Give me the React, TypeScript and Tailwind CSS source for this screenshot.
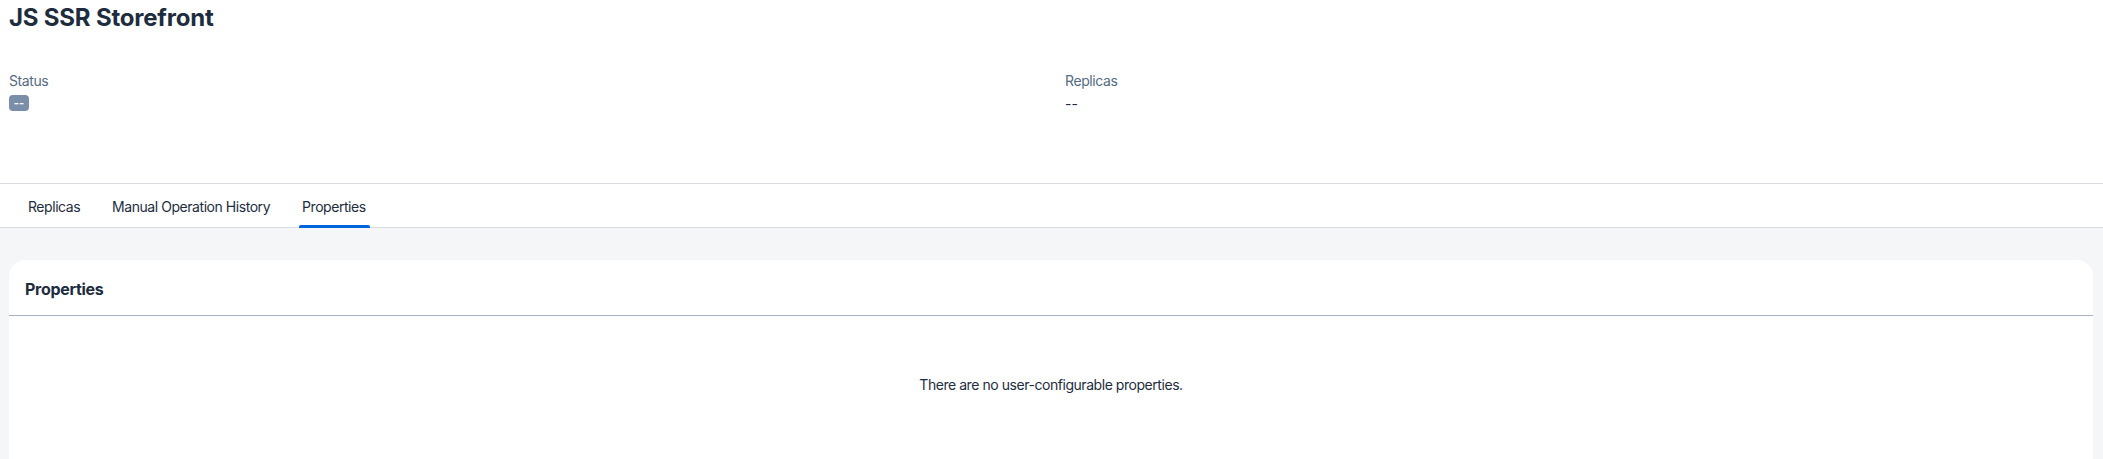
import React from "react"

const tabs = [
  { name: "Replicas", active: false },
  { name: "Manual Operation History", active: false },
  { name: "Properties", active: true },
]

export default function App() {
  return (
    <div className="min-h-screen bg-[#f5f6f7] font-['Inter','Liberation_Sans',sans-serif] text-[#1d2d3e]">
      {/* Object header */}
      <div className="bg-white">
        <div className="h-[183px] px-[9px]">
          <h1 className="pt-[3px] text-[24px] font-bold leading-[30px] tracking-[-0.2px] text-[#1d2d3e]">
            JS SSR Storefront
          </h1>
          <div className="mt-[39px] grid grid-cols-[1056px_1fr]">
            <div>
              <div className="text-[14px] leading-[18px] tracking-[-0.4px] text-[#556b82]">Status</div>
              <div className="mt-[5px] flex h-[16px] w-[20px] items-center justify-center rounded-[4px] bg-[#7b8ea8] text-[11px] font-bold leading-none text-white">
                --
              </div>
            </div>
            <div>
              <div className="text-[14px] leading-[18px] tracking-[-0.4px] text-[#556b82]">Replicas</div>
              <div className="mt-[5px] text-[14px] leading-[18px] text-[#1d2d3e]">--</div>
            </div>
          </div>
        </div>

        {/* Tabs */}
        <div className="flex h-[45px] items-stretch gap-[32px] border-y border-[#d9dde2] pl-[28px]">
          {tabs.map((tab) => (
            <div key={tab.name} className="relative flex items-center pt-[2px]">
              <span className="text-[14px] tracking-[-0.45px] text-[#1d2d3e]">{tab.name}</span>
              {tab.active && (
                <span className="absolute -left-[3px] -right-[4px] bottom-[-1px] h-[3px] rounded-t-[2px] bg-[#0064d9]" />
              )}
            </div>
          ))}
        </div>
      </div>

      {/* Content */}
      <div className="pl-[9px] pr-[10px] pt-[32px]">
        <div className="min-h-[240px] rounded-t-[16px] bg-white">
          <div className="flex h-[56px] items-center border-b border-[#a8b2bd] px-[16px]">
            <h2 className="pt-[2px] text-[16px] font-bold tracking-[-0.3px] text-[#1d2d3e]">Properties</h2>
          </div>
          <div className="pt-[58px] text-center text-[14px] tracking-[-0.45px] text-[#1d2d3e]">
            There are no user-configurable properties.
          </div>
        </div>
      </div>
    </div>
  )
}
